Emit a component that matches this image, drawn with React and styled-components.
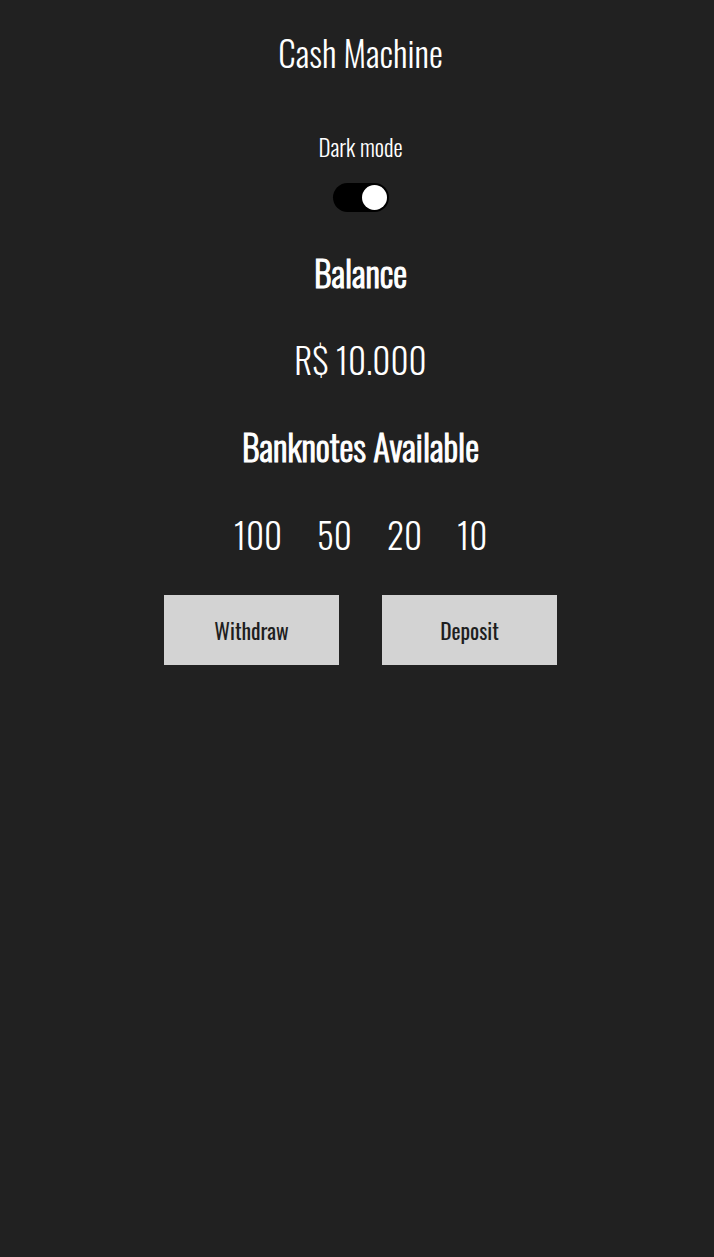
import React, { useState } from "react";
import styled, { createGlobalStyle } from "styled-components";

const GlobalStyle = createGlobalStyle`
  body {
    margin: 0;
    background: #212121;
    color: #ffffff;
    font-family: Oswald, "Liberation Sans", sans-serif;
  }
`;

const Page = styled.main`
  display: flex;
  flex-direction: column;
  align-items: center;
  min-height: 100vh;
  padding: 28px 0 0 7px;
  box-sizing: border-box;
`;

const Title = styled.h1`
  margin: 0;
  font-size: 35px;
  font-weight: 300;
  line-height: 48px;
`;

const ModeLabel = styled.label`
  margin-top: 56px;
  font-size: 23px;
  font-weight: 300;
  line-height: 30px;
`;

const Switch = styled.button`
  margin-top: 21px;
  width: 56px;
  height: 29px;
  border: none;
  border-radius: 15px;
  background: #000;
  padding: 0 2px;
  display: flex;
  align-items: center;
  justify-content: ${p => (p.$on ? "flex-end" : "flex-start")};
  cursor: pointer;
`;

const Knob = styled.span`
  width: 25px;
  height: 25px;
  border-radius: 50%;
  background: #fff;
`;

const Heading = styled.h2`
  margin: ${p => p.$gap}px 0 0;
  font-size: 35px;
  font-weight: 300;
  line-height: 48px;
  -webkit-text-stroke: 1.1px #ffffff;
`;

const Value = styled.p`
  margin: 39px 0 0;
  font-size: 35px;
  font-weight: 300;
  line-height: 48px;
`;

const Notes = styled.div`
  display: flex;
  gap: 35px;
  margin-top: 40px;
`;

const Note = styled.span`
  font-size: 35px;
  font-weight: 300;
  line-height: 48px;
`;

const Actions = styled.div`
  display: flex;
  gap: 43px;
  margin-top: 37px;
`;

const ActionButton = styled.button`
  width: 175px;
  height: 70px;
  border: none;
  background: #d3d3d3;
  color: #1e1e1e;
  font-family: Oswald, "Liberation Sans", sans-serif;
  font-size: 21.5px;
  font-weight: 400;
  cursor: pointer;
`;

export default function App() {
  const [dark, setDark] = useState(true);
  return (
    <Page>
      <GlobalStyle />
      <Title>Cash Machine</Title>
      <ModeLabel>Dark mode</ModeLabel>
      <Switch $on={dark} onClick={() => setDark(!dark)} aria-label="Dark mode">
        <Knob />
      </Switch>
      <Heading $gap={36}>Balance</Heading>
      <Value>R$ 10.000</Value>
      <Heading $gap={39}>Banknotes Available</Heading>
      <Notes>
        {[100, 50, 20, 10].map(n => (
          <Note key={n}>{n}</Note>
        ))}
      </Notes>
      <Actions>
        <ActionButton>Withdraw</ActionButton>
        <ActionButton>Deposit</ActionButton>
      </Actions>
    </Page>
  );
}
